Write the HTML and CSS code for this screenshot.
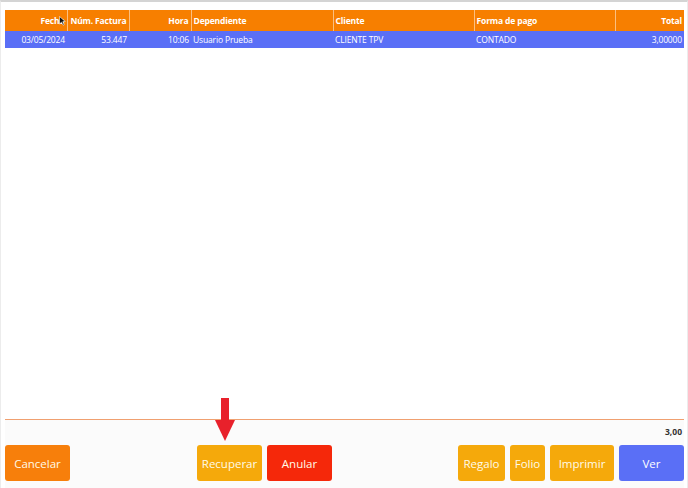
FILE: index.html
```html
<!DOCTYPE html>
<html lang="es">
<head>
    <meta charset="UTF-8">
    <meta name="viewport" content="width=device-width, initial-scale=1.0">
    <title>Tickets</title>
    <link rel="stylesheet" href="styles.css">
</head>
<body>
    <div class="screen">
        <div class="grid-area">
            <table class="grid">
                <colgroup>
                    <col style="width: 62px">
                    <col style="width: 62px">
                    <col style="width: 62px">
                    <col style="width: 142px">
                    <col style="width: 141px">
                    <col style="width: 141px">
                    <col style="width: 69px">
                </colgroup>
                <thead>
                    <tr>
                        <th class="num">Fecha</th>
                        <th class="num">Núm. Factura</th>
                        <th class="num">Hora</th>
                        <th>Dependiente</th>
                        <th>Cliente</th>
                        <th>Forma de pago</th>
                        <th class="num">Total</th>
                    </tr>
                </thead>
                <tbody>
                    <tr class="selected">
                        <td class="num">03/05/2024</td>
                        <td class="num">53.447</td>
                        <td class="num">10:06</td>
                        <td>Usuario Prueba</td>
                        <td>CLIENTE TPV</td>
                        <td>CONTADO</td>
                        <td class="num">3,00000</td>
                    </tr>
                </tbody>
            </table>
            <svg class="cursor" width="7" height="10" viewBox="0 0 7 10">
                <path d="M0.5 0.5 L0.5 8 L2.5 6.2 L4 9.2 L5.2 8.6 L3.8 5.7 L6.3 5.5 Z" fill="#111" stroke="#fff" stroke-width="0.6"/>
            </svg>
        </div>

        <div class="footer">
            <div class="total-row">3,00</div>
            <div class="buttons">
                <button class="btn btn-cancel">Cancelar</button>
                <button class="btn btn-amber btn-recover">Recuperar</button>
                <button class="btn btn-red">Anular</button>
                <button class="btn btn-amber btn-gift">Regalo</button>
                <button class="btn btn-amber btn-folio">Folio</button>
                <button class="btn btn-amber btn-print">Imprimir</button>
                <button class="btn btn-blue">Ver</button>
            </div>
        </div>

        <svg class="arrow" width="20" height="44" viewBox="0 0 20 44">
            <rect x="6" y="0" width="8" height="24" fill="#e8212b"/>
            <polygon points="0,22 20,22 10,43" fill="#e8212b"/>
        </svg>
    </div>
</body>
</html>
```

FILE: styles.css
```css
html, body {
    margin: 0;
    padding: 0;
}
body {
    font-family: "Open Sans", "Noto Sans", sans-serif;
    background: #ffffff;
}
.screen {
    position: relative;
    height: 488px;
    box-sizing: border-box;
    border-top: 2px solid #d4d4d4;
    border-left: 1px solid #ececec;
    border-right: 1px solid #ececec;
    display: flex;
    flex-direction: column;
}
.grid-area {
    position: relative;
    flex: 1;
    padding: 8px 3px 0 4px;
}
.grid {
    width: 679px;
    table-layout: fixed;
    border-collapse: collapse;
    font-size: 8.5px;
    letter-spacing: -0.15px;
    color: #ffffff;
}
.grid th {
    background: #f77f00;
    height: 21px;
    padding: 0 2px;
    font-weight: 700;
    text-align: left;
    border-left: 1px solid #fbbf80;
    white-space: nowrap;
    overflow: hidden;
}
.grid th:first-child {
    border-left: none;
}
.grid td {
    height: 17px;
    padding: 0 2px;
    white-space: nowrap;
    overflow: hidden;
}
.grid .num {
    text-align: right;
}
.grid .selected td {
    background: #5a6ff6;
}
.cursor {
    position: absolute;
    left: 58px;
    top: 14px;
}
.footer {
    margin: 0 3px 0 4px;
    border-top: 1px solid #f0a070;
    background: #fbfbfb;
    padding-bottom: 7px;
}
.total-row {
    text-align: right;
    font-size: 8.5px;
    font-weight: 700;
    color: #333333;
    height: 25px;
    line-height: 24px;
    padding-right: 2px;
}
.buttons {
    display: flex;
    gap: 5px;
}
.btn {
    height: 36px;
    border: none;
    border-radius: 3px;
    color: #fffbe8;
    font-family: "Open Sans", "Noto Sans", sans-serif;
    font-size: 11.5px;
    padding: 0;
    cursor: pointer;
}
.btn-cancel {
    width: 65px;
    background: #f77f0b;
}
.btn-amber {
    background: #f5a90b;
}
.btn-red {
    width: 65px;
    background: #f5280a;
}
.btn-blue {
    width: 65px;
    background: #5a6ff6;
    color: #ffffff;
}
.btn-recover {
    width: 65px;
    margin-left: 122px;
}
.btn-gift {
    width: 47px;
    margin-left: auto;
}
.btn-folio {
    width: 35px;
}
.btn-print {
    width: 64px;
}
.arrow {
    position: absolute;
    left: 214px;
    top: 396px;
}
```
